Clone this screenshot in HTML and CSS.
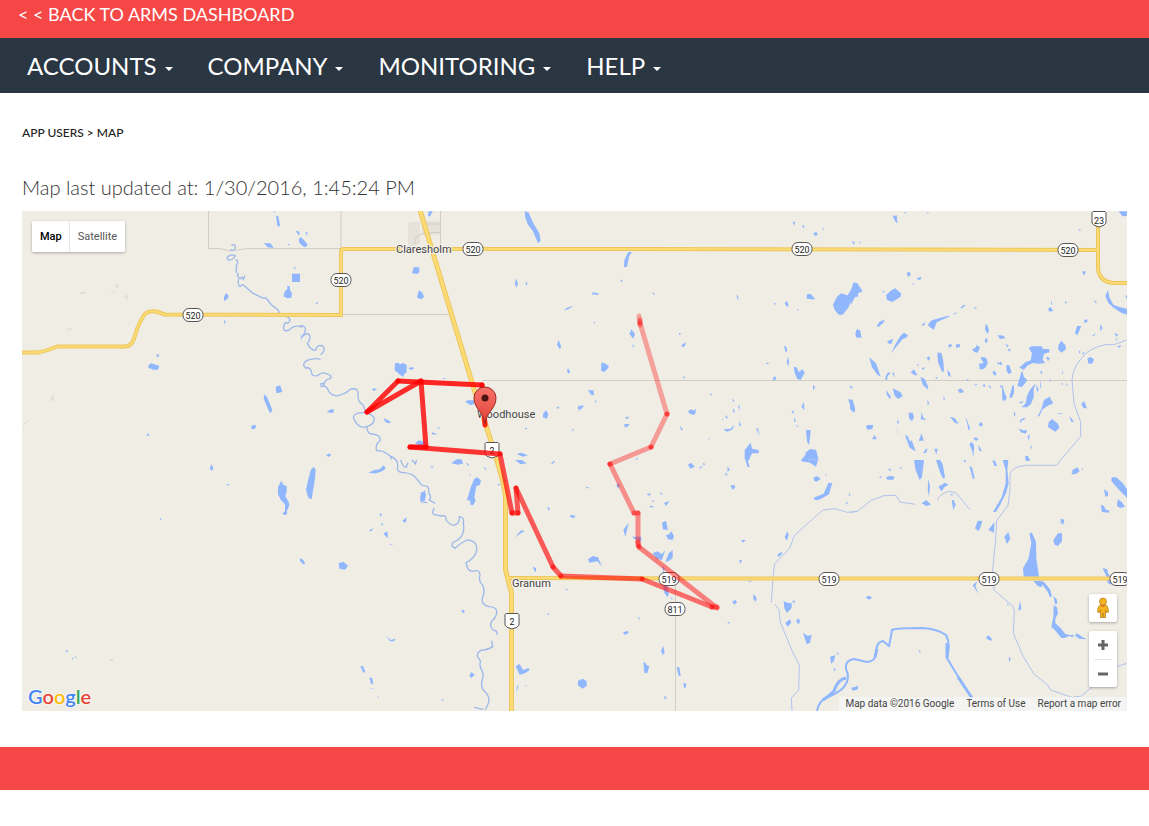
FILE: index.html
```
<!DOCTYPE html>
<html lang="en">
<head>
    <meta charset="UTF-8">
    <title>App Users - Map</title>
    <link rel="stylesheet" href="styles.css">
</head>
<body>
    <header class="top-bar">
        <a href="#">&lt; &lt; BACK TO ARMS DASHBOARD</a>
    </header>

    <nav class="main-nav">
        <a href="#">ACCOUNTS <span class="caret"></span></a>
        <a href="#">COMPANY <span class="caret"></span></a>
        <a href="#">MONITORING <span class="caret"></span></a>
        <a href="#">HELP <span class="caret"></span></a>
    </nav>

    <main class="content">
        <div class="breadcrumb">APP USERS &gt; MAP</div>
        <h1 class="updated">Map last updated at: 1/30/2016, 1:45:24 PM</h1>

        <div class="map">
            <svg class="map-canvas" viewBox="0 0 1105 500" preserveAspectRatio="xMinYMin slice">
                <defs>
                    <g id="pill">
                        <rect x="-10" y="-6.5" width="20" height="13" rx="6" />
                    </g>
                    <path id="shield" d="M-6 -7.5 H6 Q7.5 -7 7 -4 V4 Q6.500 6.500 0 8 Q-6.500 6.500 -7 4 V-4 Q-7.500 -7 -6 -7.500Z" />
                    <linearGradient id="pinFill" x1="0" y1="0" x2="0" y2="1">
                        <stop offset="0" stop-color="#f8746a" />
                        <stop offset="1" stop-color="#e04038" />
                    </linearGradient>
                </defs>

                <!-- town area -->
                <path class="town" d="M386 12 L398 10 V32 L386 40Z M400 10 H418 V24 H400Z" />

                <!-- small roads -->
                <g class="minor">
                    <path d="M186.500 0 V37.500 H198 Q206 41 216 39 Q222 37.500 230 37.500 H319" />
                    <path d="M319 0 V38 M418.500 0 V38 M319 103.500 H428 M460 169.500 H1105 M653.500 368 V500" />
                    <path d="M393 33 V27 Q398 23 405 21.500 H418 M405 13 H418" />
                </g>

                <!-- rivers and canals -->
                <g class="river">
                    <g transform="translate(0 -1) scale(.33333)">
                        <path d="M628 106 Q640 100 640 112 T624 120 M618 138 Q612 150 622 150 T640 138 Q628 130 618 140 M640 150 Q652 150 644 164 L642 188 M648 188 Q644 200 656 206 Q662 196 664 210 L668 196 M650 206 Q646 226 654 230 Q660 220 668 228 L690 248 722 264 732 264 748 284 768 300 776 318 Q800 316 804 330 Q800 344 790 338 Q780 352 788 362 Q802 364 808 354 Q822 344 840 352" />
                    </g>
                    <g transform="translate(278 -1) scale(.33333)">
                        <path d="M0 346 Q18 348 16 360 T6 380 Q20 366 28 374 Q34 386 22 400 Q34 424 48 420 Q50 402 68 408 Q80 420 62 434 M62 448 Q40 442 20 452 Q4 462 16 474 Q32 470 34 486 T54 496 Q64 486 76 490 Q100 496 90 506 Q72 510 72 524 Q58 514 64 530 Q80 524 86 544 Q98 560 116 556 Q140 550 150 538 Q178 530 174 560 Q174 574 190 586 Q196 608 200 608 M200 608 Q162 606 160 622 Q170 652 192 652 Q228 644 222 622 Q212 612 200 608 M200 650 Q202 674 218 672 Q244 676 240 692 Q224 704 230 722 Q248 720 262 732 Q272 736 275 748" />
                    </g>
                    <g transform="translate(278 249) scale(.33333)">
                        <path d="M270 -12 Q298 -2 292 24 Q292 38 312 38 Q338 40 350 56 Q358 68 366 76 Q390 76 386 94 L386 100 M376 92 Q358 108 364 126 L382 128 M386 100 Q396 110 388 120 L406 130 M402 144 Q394 164 404 164 L424 168 Q440 164 438 180 Q446 192 462 196 Q480 190 478 170 Q494 172 490 190 Q494 212 486 226 Q478 240 458 248 Q452 262 466 264 Q480 250 500 240 Q534 242 530 272 Q524 296 498 308 Q502 334 518 334 Q540 326 540 346 Q534 362 548 376 Q556 392 548 412 Q542 434 566 440 Q592 440 590 458 Q588 474 576 482 Q566 500 580 510 Q594 512 590 524 M575 542 L578 560 Q560 572 544 570 Q528 580 534 592 L542 604 Q536 618 546 632 Q552 644 546 662 Q542 684 552 692 Q570 708 566 728 L556 750 M522 742 L550 748" />
                        <path d="M302 0 Q310 24 318 22 L324 8 M336 0 L346 12 350 0" />
                    </g>
                    <g class="canal">
                        <path transform="translate(556 249) scale(.33333)" d="M840 154 L808 157 770 146 735 150 650 225 635 265 590 312 585 350 580 428 M590 432 L603 450 607 486 643 574 664 615 662 690 640 714 642 752" />
                        <path transform="translate(828 249) scale(.33333)" d="M0 157 L22 154 62 122 102 107 138 106 150 126 196 133 M262 122 Q266 104 296 94 L318 98 360 149 M632 0 L620 16 528 16 Q484 20 480 44 L480 90 474 136 440 182 436 250 428 330 432 390 488 438 493 452 490 520 520 590 552 642 592 674 602 690 666 712 694 708 730 678 800 620 830 610" />
                        <path transform="translate(828 -1) scale(.33333)" d="M830 390 L792 404 766 404 Q714 414 690 450 Q668 478 666 510 L672 580 692 636 692 680 632 750" />
                    </g>
                </g>

                <!-- lakes -->
                <g class="water">
                    <path transform="translate(0 -1) scale(.33333)" d="M762 17 l7 2 5 25 -2 6 -6 -3Z M754 4 l5 0 -1 5Z M726 99 l20 1 9 14 -18 -2Z M822 64 l6 -2 6 8 -5 6Z M830 86 l10 -4 0 24 -8 -8Z M810 191 h24 v25 h-24Z M796 228 l7 0 1 12 6 10 -2 13 -12 2 -12 -6 4 -14 8 -8Z M815 172 l6 0 -2 8Z M612 249 l8 8 -3 9 -11 7 0 -12Z M606 330 l5 4 -3 10Z M380 465 l8 -5 24 8 -4 11 -14 0 -15 -6Z M403 434 l7 -2 1 7 -6 3Z M761 530 l14 -4 6 20 -18 4Z M727 553 l8 8 16 38 -4 10 -5 -3 -17 -40Z M688 648 l10 -4 5 4 -4 8 -10 2Z M373 676 l8 -7 1 5 -5 5Z M797 102 l6 0 -2 5Z M835 372 l6 10 -2 10Z" />
                    <path transform="translate(278 -1) scale(.33333)" d="M0 82 l10 6 13 16 -6 8 -10 -4 -7 -10Z M386 4 h12 l-8 16 -6 -2Z M674 4 l12 4 14 32 18 30 4 22 -8 8 -8 -20 -8 -18 -14 -18 -8 -20Z M341 172 h17 l0 14 -6 6 -16 -2Z M357 241 l9 6 6 12 -4 7 -12 0 -5 -6Z M647 205 l7 14 -4 14 -5 -9Z M677 213 l6 8 -5 6Z M793 302 l6 -8 21 -7 -10 8Z M46 280 l9 -4 -3 7Z M776 390 l8 20 -5 8 -8 -14Z M804 475 l7 10 -6 6 -4 -8Z M285 460 l10 -2 5 5 10 -4 10 6 0 22 -8 6 -2 8 -12 -8 -14 -12Z M325 474 l12 -3 6 4 -10 5Z M428 503 l10 2 -6 3Z M496 576 l6 -5 20 0 0 11 -10 4Z M88 600 l12 -3 2 10 -8 2 -14 -4Z M216 538 l6 5 10 -6 -12 -2Z M250 624 l14 7 10 6 -8 3 -10 -4Z M396 666 l6 4 8 0 -4 4 -10 -1Z M410 656 l8 -6 2 4Z M345 700 l12 -9 16 4 4 8 -18 4Z M370 566 l4 6 -4 12Z M370 625 l6 6 -6 4Z M738 600 l7 12 -4 14 -12 -4 0 -10Z M768 594 l10 -5 -2 7Z M834 585 l8 8 -5 12Z M674 653 l8 2 -6 4Z M650 732 l14 -4 20 8 -16 4Z M78 736 l10 -6 5 5 -7 6Z M814 664 l6 -10 1 6Z M16 68 l6 -3 0 12Z" />
                    <path transform="translate(556 -1) scale(.33333)" d="M150 127 l12 -2 -9 14 -2 12 -4 20 -9 0 1 -20Z M127 208 l7 4 -5 5Z M44 247 l16 3 2 5 -14 -2 -6 2Z M221 247 l8 3 0 6Z M160 358 l11 14 -5 14 -12 -14Z M164 403 l6 6 -6 3Z M70 458 l7 0 16 10 -4 8 -10 10 -10 -4Z M311 405 l12 -8 -2 12 -8 2Z M302 368 l8 3 -6 4Z M313 500 l8 0 -3 6Z M46 336 l6 0 -3 5Z M30 541 l16 0 2 14 -8 0Z M0 592 l10 -6 8 2 -8 9 -10 0Z M51 570 l5 6 -5 2Z M139 624 l12 -5 0 8Z M139 642 l16 0 -8 10 -7 -1Z M331 602 l10 -4 6 4 7 -6 -2 16 -8 3 -12 -7Z M307 647 l6 10 3 4 -8 -2Z M476 253 l4 6 2 12 -5 -6Z M644 35 l7 1 -2 12Z M672 46 l8 2 -4 7Z M705 70 l10 -4 4 8 -6 5Z M822 93 l8 4 -2 6Z M734 54 l5 2 -4 5Z M620 278 l8 -4 3 10 1 6 -8 -2Z M688 252 l10 0 14 16 -16 0 -11 -3Z M588 278 l7 3 -5 4Z M656 298 l6 0 -2 4Z M765 284 l12 -24 12 -10 20 6 12 -20 6 -20 13 8 0 36 -18 2 -10 30 -18 22 -12 0 -12 -14Z M832 370 l8 -16 0 30 -6 -2Z M618 409 l6 0 4 14 -5 4Z M630 440 l3 14 -2 16 -5 -14Z M647 470 l9 2 6 14 12 -8 6 10 -12 22 -10 -3 -8 -18Z M586 500 l8 0 -1 10 -8 2Z M563 458 l12 0 -8 5Z M396 550 l6 2 -3 6Z M705 525 l7 6 -7 10Z M814 526 l10 5 -4 6Z M810 566 l10 6 10 32 -8 0Z M670 590 l8 -15 1 26Z M640 602 l8 0 -2 10Z M648 620 l6 14 -5 3Z M655 642 l6 8 -4 1Z M463 566 l6 5 -4 6Z M466 594 l4 10 2 4 -8 -4Z M480 590 l5 -4 0 12 3 8Z M442 622 l4 -7 4 12Z M432 628 l5 -3 -3 6Z M484 633 l6 14 -7 0Z M436 657 l20 0 14 -13 -8 15 -16 6Z M534 655 l6 0 5 22Z M391 686 l7 0 -6 3Z M684 660 h14 l-1 16 -4 30 -6 -12Z M518 698 l4 18 20 4 0 10 -20 0 -10 22 -12 -4 0 -28Z M696 717 l18 2 8 30 -36 0 -4 -20Z M670 750 l16 -20 4 20Z M172 750 l6 -10 0 8Z" />
                    <path transform="translate(828 -1) scale(.33333)" d="M126 15 l4 4 10 -4 2 25 -5 -4Z M163 6 l7 2 -5 3Z M230 7 l8 2 -5 2Z M6 93 l8 8 -5 1Z M29 92 l4 6 -3 4Z M0 248 l12 -30 10 2 16 24 -18 8 -18 34Z M108 256 l14 -14 14 -7 18 16 -3 10 -16 10 -8 5 -16 -6Z M98 241 l6 4 -5 4Z M170 188 l10 -2 2 10 -8 4Z M201 205 l11 -5 2 8 -10 2Z M188 220 l6 3 -5 2Z M80 348 l8 -12 17 -8 -6 12 -14 11Z M18 360 l12 0 5 24 -12 -2Z M112 394 l18 -8 -6 16 -10 -2Z M123 430 l14 -28 14 -24 10 -10 12 6 -2 8 -14 6 -16 20Z M233 345 l12 -14 50 -14 5 2 -40 18 -8 22 -10 -6Z M214 345 l12 -8 -4 10Z M308 313 l12 -7 -4 7Z M330 295 l10 -10 8 0 -12 10Z M369 292 l12 2 -4 4Z M407 342 l4 2 6 16 -4 12 -8 -12Z M404 395 l3 -12 7 7 -5 10Z M443 375 l18 2 5 8 -16 2Z M294 406 l8 -4 5 4 -8 8Z M318 403 h12 l0 8 -12 2Z M366 418 l10 -4 4 -8 10 6 -7 16 -10 -2Z M391 443 q20 -8 22 16 q-8 24 -24 18 l-2 -16 14 -2Z M443 454 l6 6 4 -6 4 12 -14 -4Z M466 402 l10 4 -4 6Z M474 416 l9 2 -6 8Z M470 464 l8 2 7 22 -10 4 -6 -12Z M262 428 h12 l6 26 2 30 -6 2 -12 -30Z M292 480 l8 8 2 14 -8 -6Z M230 443 l8 -4 2 8 -5 5Z M200 464 l6 -3 -2 8Z M215 475 l12 -4 -8 9Z M182 488 l10 -10 10 18 -6 0Z M210 502 l6 4 M256 502 l8 0 -5 6Z M58 442 l20 18 14 40 -10 -6 -16 -22Z M105 508 q4 -22 14 -22 l0 8 q-8 0 -7 16Z M126 488 l6 0 2 16Z M211 500 l14 8 10 24 -2 6 -14 -12Z M536 415 l8 -6 32 0 2 8 20 0 0 10 -16 4 -4 18 8 10 -20 2 -18 -2 -16 8 -10 12 -14 -6 18 -16 16 -6 4 -22Z M634 392 l12 14 2 12 -14 10 -10 -10 2 -14Z M516 481 l6 20 10 10 -16 20 -14 -3 8 -28Z M588 440 l12 4 -6 10Z M712 446 l8 -6 12 8 -4 12 -12 2Z M686 421 l6 4 -4 6Z M696 430 l8 -4 -4 8Z M675 370 l6 -22 13 0 -6 14 -6 14Z M702 330 l10 -2 0 8 -8 3Z M750 342 l8 12 -7 10Z M727 376 l10 -6 -6 9Z M793 368 l12 6 -6 6Z M797 382 l5 8 -4 2Z M800 410 l14 -5 -5 8Z M696 185 l11 -2 -4 14Z M594 296 l8 -5 8 12 -12 2Z M603 270 l3 12 -3 4Z M645 273 l6 4 -5 5Z M732 270 l9 6 -4 4Z M774 240 l4 22 12 22 16 6 25 6 0 18 -18 -6 -24 -16 -14 -14 -9 -20Z M826 258 l6 -4 0 16Z M806 4 h25 v14 l-14 1Z M686 58 l8 1 -6 4Z M323 540 l10 -5 10 12 -14 2Z M108 540 l14 18 -1 10 -10 -12Z M128 535 l12 6 12 6 6 12 -14 8 -10 -10Z M232 570 l6 10 -5 6Z M280 560 l6 6 -5 4Z M456 540 l2 -15 4 18 8 20 -5 10 -8 -3Z M478 562 l4 -16 6 -20 4 0 0 24 -7 14Z M515 592 l12 -12 4 -22 10 -20 16 -18 -6 18 0 24 -8 20 -12 10Z M506 577 l15 -3 -8 7Z M558 521 l8 18 -5 8Z M562 620 l12 -22 8 -28 16 -10 12 20 -14 6 -18 12 -10 20Z M622 610 l18 0 -10 3Z M694 583 l8 -10 9 22 -10 0Z M606 627 l18 14 4 12 -12 12 -22 -14 2 -14Z M658 620 l6 4 8 12 -8 0Z M491 603 l6 10 -5 8Z M510 632 q8 -12 18 -6 l-10 4 -8 10Z M506 655 l12 6 14 0 -5 10 -14 -4Z M532 680 l7 -8 -2 20Z M0 568 l8 2 8 28 -4 10 -12 -12Z M48 650 l4 -5 18 0 -3 12 -14 2Z M66 688 l8 -14 6 14Z M141 628 l7 10 -6 3Z M141 650 l3 14 1 14Z M176 608 h12 l4 14 -6 12 -9 -9Z M212 628 l3 -22 4 16 10 8Z M300 620 l14 4 12 18 -12 -4Z M346 622 l6 10 9 26 -6 2 -3 -18Z M386 642 l8 -6 5 10 -8 4Z M165 676 l8 2 8 18 4 -6 12 34 -6 -3 -12 -8Z M206 692 l9 -22 6 22Z M220 728 l8 -12 5 0 -6 14Z M253 716 h10 l-4 18Z M370 686 l8 -5 7 6 -6 6Z M358 702 l8 -6 6 10 0 14 -3 24 -2 -20Z M385 704 l8 14 2 6 -8 -2Z M526 738 l8 0 6 12 -14 0Z M543 704 l3 12 -5 -2Z M397 528 l6 -7 4 10Z M414 526 l8 2 0 8Z M427 486 l8 -4 5 14 -8 0Z M372 524 l10 -2 -4 5Z M450 526 l10 3 -8 4Z M572 480 l6 8 -6 5Z M570 510 l4 18 -3 8Z M598 508 l6 4 -3 4Z M636 480 l4 8 -2 6Z M634 518 l5 3 -2 6Z M648 520 l5 3 -3 6Z M352 506 l5 3 -8 3Z" />
                    <path transform="translate(0 249) scale(.33333)" d="M568 12 l6 12 -3 8 -8 -4Z M614 71 l10 3 -9 3Z M778 62 l6 12 10 4 0 16 -4 14 10 18 2 8 -4 14 -4 2 2 10 -6 6 -9 -5 8 -8 0 -20 -12 -12 -9 -18 0 -22Z M414 173 l5 4 -4 4Z M832 296 l8 2 0 8Z M150 592 l4 3 -3 5Z M160 587 l4 5 -4 2Z M131 572 l8 -2 -5 9Z" />
                    <path transform="translate(278 249) scale(.33333)" d="M32 30 l10 -10 5 10 -2 26 -10 62 -10 -4 -7 -26 6 -26Z M205 38 l18 -8 16 -2 12 -12 6 8 -8 8 -20 8 -12 0Z M513 80 l10 -24 10 -4 10 10 -4 14 -10 2 -6 34 4 10 -8 14 -8 -2 0 -12 -10 -2 6 -20Z M454 10 l16 -12 14 0 6 12 -14 4Z M498 8 l8 4 -2 7Z M508 42 l5 3 -3 4Z M551 21 l8 4 -3 6Z M592 72 l12 2 -8 3Z M645 0 h20 l15 10 -18 3Z M753 12 l8 -10 4 3 -8 7Z M362 98 l12 -4 4 10 -4 20 -12 -2Z M238 160 l8 3 -4 8Z M243 188 l7 4 -4 6Z M206 212 l14 -8 -6 10Z M262 213 l2 22 -14 -14Z M307 182 l12 -10 0 12 -6 4Z M267 253 l14 0 -8 2Z M116 310 l14 -5 14 12 -8 12 -18 -3Z M0 295 l10 5 5 10 -3 4 -12 -10Z M484 450 l8 0 3 6 -6 4Z M258 528 l14 12 14 -4 -4 8 -12 0Z M181 618 l8 0 7 18 -6 2Z M208 653 l8 0 4 16 -6 5Z M209 684 l14 2 -8 1Z M647 618 l12 -6 10 18 16 -6 4 6 -14 10 -16 4 -6 -12Z M514 636 l10 8 -10 10 -6 -6Z M649 698 l2 -18 6 -6Z M670 676 l12 1 -4 2Z M838 658 l2 22 -7 -8Z M645 236 l8 -14 12 -12 8 4 -14 8 -14 12Z M698 320 l10 4 0 12 -4 -2Z M742 140 l8 5 -4 8Z M811 165 l16 2 -6 8 -10 -4Z M796 385 l8 4 -4 3Z M741 460 l8 2 -4 4Z M425 716 l7 5 -5 3Z M232 706 l4 5 -2 3Z M390 18 l12 2 -6 4Z" />
                    <path transform="translate(556 249) scale(.33333)" d="M330 14 l9 -6 12 12 -14 6Z M362 25 l8 -6 2 5Z M375 8 l7 4 -5 5Z M448 20 l8 8 -7 8Z M441 38 l8 4 -5 6Z M502 0 h7 l6 20 -6 2Z M670 0 h50 l-6 20 -18 -12 -26 -4Z M707 52 l12 -3 9 8 -12 8 -8 -3Z M707 113 l30 -12 14 -32 12 0 -10 34 -18 10 -16 8 -10 -2Z M457 76 l14 0 0 8 -8 5Z M24 80 l10 2 -8 4Z M205 102 l15 -2 -6 8Z M214 137 l15 2 -10 4Z M247 96 l7 5 -5 4Z M258 128 l16 -4 -10 15Z M222 120 l7 2 -4 5Z M115 76 l6 -7 4 8 -4 10Z M136 210 l8 -12 8 -8 -10 40Z M162 230 l28 0 0 14 -20 -6Z M252 188 l12 -6 6 28 -15 -2Z M264 226 l10 -4 6 -8 8 14 -4 12 -14 -2Z M224 280 l14 -6 14 8 10 -12 -10 30 -16 -4Z M262 306 l10 -26 12 -10 0 24 -10 8Z M30 298 l14 -10 16 4 12 28 -14 -16 -24 4Z M253 314 l8 12 -5 14Z M256 378 l12 0 5 24 -5 10 -9 -14Z M278 410 l7 8 -5 0Z M489 240 l14 0 -8 8Z M484 300 l8 0 -6 12Z M620 232 l8 -18 4 10 -5 18Z M598 284 l12 -8 4 4 -12 12Z M512 363 l11 2 -9 2Z M463 424 l10 -4 4 8 -9 6Z M526 402 l10 12 -3 12 -7 -10Z M617 424 l12 4 12 2 0 14 -14 15 -8 -14Z M642 424 l8 -3 0 10Z M622 488 l14 -10 4 10 -12 12Z M654 480 l10 -4 2 12 -7 4Z M675 518 l14 10 12 -4 -5 24 -10 5Z M447 487 l10 0 -4 4Z M180 468 l6 8 -3 4Z M134 518 l14 -6 4 6 -10 7Z M249 572 l7 -14 4 18 -6 10Z M196 606 l6 2 4 8 8 2 -6 22 -9 -2Z M296 622 h8 l4 26 -6 0Z M316 670 h8 l0 12 -6 2Z M258 708 l8 4 -5 8Z M0 662 l14 -6 12 8 0 14 -12 8 -14 -10Z M756 590 l16 -4 -4 16 -8 10Z M778 574 l4 8 -4 4Z M766 625 l8 2 -5 7Z M812 98 l6 8 -5 2Z M803 130 l6 -6 -2 10Z M820 684 l20 -6 0 10 -12 2Z M742 42 l5 2 -3 4Z" />
                    <path transform="translate(828 249) scale(.33333)" d="M192 0 h30 l-6 52 -7 8 -12 -30Z M258 0 h12 l8 12 7 40 -5 4 -8 -14Z M265 80 l20 -12 10 6 -12 8 -8 12Z M215 130 l14 -10 14 14 -14 4Z M235 56 l5 24 -3 30 -4 -22Z M108 52 l14 -5 12 4 -4 8 -18 0Z M86 52 l8 -4 0 6Z M113 28 l8 -2 2 8Z M147 22 l9 2 -4 4Z M358 18 l8 4 8 32 -5 4Z M427 0 l9 4 5 14 -8 0Z M340 0 l8 0 -3 8Z M458 0 h17 l-3 30 4 40 -8 30 -18 36 -12 20 -9 0 26 -44 12 -42 0 -40Z M375 205 l8 -22 14 -1 -5 18 -6 14Z M415 210 l18 -24 -1 32Z M463 230 l12 -14 6 20 -10 16Z M305 120 l6 0 6 14 -7 16Z M300 102 l12 2 -8 3Z M538 220 l8 -2 12 28 1 50 8 54 -46 0 -2 -25 16 -28 4 -20 5 -28Z M550 362 l28 2 -3 18 -12 -4Z M610 240 l14 -20 12 0 0 24 -12 14 -10 -4Z M632 176 l11 3 -3 15 -8 -6Z M667 30 l16 -8 6 12 -12 8 -10 0Z M664 40 l5 3 -3 3Z M694 24 l6 3 -3 4Z M785 52 l14 0 20 18 12 18 0 26 -14 -14 -24 -26 -9 -12Z M762 88 l12 8 0 12 -8 2Z M752 134 l10 4 4 10 12 4 -2 6 -20 -2Z M803 118 l12 8 10 14 -14 4 -10 -6Z M758 324 l14 4 2 12 12 16 0 18 -12 -4 -4 -18Z M368 376 l14 -12 -6 14 10 24Z M408 534 l6 -8 10 8 2 8 -10 -2Z M505 446 l6 -24 3 24 -6 6Z M471 430 l6 3 -4 5Z M476 596 l3 -6 3 8 -4 8Z M46 412 l12 -5 8 6 -8 6Z M205 570 l8 4 -4 4Z M4 684 l22 -4 -8 10 -10 2Z M204 722 l6 2 -6 5Z M525 0 l18 0 -10 4Z M568 362 l14 4 18 22 6 20 -6 4 -8 -18Z M610 408 l10 10 2 12 -6 4Z M611 436 l10 6 3 18 -8 16 0 14 16 14 14 18 16 4 -18 8 -10 0 -18 -22 -12 -12 6 -30Z M656 526 l14 -2 2 6 -10 0Z M678 520 l10 4 8 6 14 8 -22 -2 -12 -8Z" />
                </g>

                <!-- wide creek in the south -->
                <g class="creek">
                    <path d="M795 500 Q797 490 804 487 Q816 482 821 477 Q829 468 824 458 Q823 449 832 448 L845 451 Q854 450 854 442 Q854 431 861 430 L867 435 Q869 426 870 419 Q874 417 900 417 Q916 418 924 424 Q929 433 925 447 Q936 466 950 487" />
                    <path d="M801 489 Q806 486 812 480 Q816 468 824 467 M925 432 L925 447 M853 446 L855 438 M936 466 L950 487" class="thick" />
                </g>

                <!-- hills -->
                <path class="hill" d="M58 82 l5 -1 -1 2Z M93 74 l4 0 -2 3Z M102 86 l3 -2 1 5Z M45 119 l5 -2 -2 2Z M28 190 l3 -6 1 4Z M1 214 l5 -5 -2 3Z M89 82 l3 -1Z M87 449 l3 -1 1 2Z M23 498 l3 -3Z" />

                <!-- highways -->
                <g class="road-edge">
                    <path d="M0 141.500 H15 Q22 141 35 135.500 H103 C111 135 112 128 115 118 C121 104 123 99 134 100.500 L143 103.500 L319 104 V41 Q319 38 322 38 H600 L1076 39" />
                    <path d="M1076 0 V57 Q1077 71 1092 72 H1105" />
                    <path d="M398 -1 L452 178 L470 233 L475 250 Q483 276 483.500 286 V359 L489.500 382 V500" class="wide" />
                    <path d="M487 367 L700 367.500 H1105" />
                </g>
                <g class="road">
                    <path d="M0 141.500 H15 Q22 141 35 135.500 H103 C111 135 112 128 115 118 C121 104 123 99 134 100.500 L143 103.500 L319 104 V41 Q319 38 322 38 H600 L1076 39" />
                    <path d="M1076 0 V57 Q1077 71 1092 72 H1105" />
                    <path d="M398 -1 L452 178 L470 233 L475 250 Q483 276 483.500 286 V359 L489.500 382 V500" class="wide" />
                    <path d="M487 367 L700 367.500 H1105" />
                </g>

                <!-- road numbers -->
                <g class="sign">
                    <use href="#pill" x="171" y="104" /><text x="171" y="107.500">520</text>
                    <use href="#pill" x="319" y="69" /><text x="319" y="72.500">520</text>
                    <use href="#pill" x="451" y="38" /><text x="451" y="41.500">520</text>
                    <use href="#pill" x="780" y="38" /><text x="780" y="41.500">520</text>
                    <use href="#pill" x="1046" y="39" /><text x="1046" y="42.500">520</text>
                    <use href="#pill" x="647" y="368" /><text x="647" y="371.500">519</text>
                    <use href="#pill" x="807" y="368" /><text x="807" y="371.500">519</text>
                    <use href="#pill" x="967" y="368" /><text x="967" y="371.500">519</text>
                    <use href="#pill" x="1098" y="368" /><text x="1098" y="371.500">519</text>
                    <use href="#pill" x="653" y="398" /><text x="653" y="401.500">811</text>
                    <use href="#shield" x="1077" y="8" /><text x="1077" y="12.500">23</text>
                    <use href="#shield" x="470" y="239" /><text x="470" y="243">2</text>
                    <use href="#shield" x="490" y="410" /><text x="490" y="414">2</text>
                </g>

                <g class="place">
                    <text x="374" y="42">Claresholm</text>
                    <text x="455" y="207">Woodhouse</text>
                    <text x="490" y="376">Granum</text>
                </g>

                <!-- tracked route, newest part is the strongest -->
                <g class="route">
                    <path opacity=".85" d="M463 214 L460 174" />
                    <path opacity=".85" d="M460 174 L376 170" />
                    <path opacity=".82" d="M376 170 L345 201" />
                    <path opacity=".82" d="M345 201 L399 170" />
                    <path opacity=".8" d="M399 170 L404 236" />
                    <path opacity=".8" d="M404 236 L388 236" />
                    <path opacity=".78" d="M388 236 L478 243" />
                    <path opacity=".68" d="M478 243 L490 302" />
                    <path opacity=".66" d="M490 302 H496" />
                    <path opacity=".64" d="M496 302 L494 277" />
                    <path opacity=".62" d="M494 277 L531 356" />
                    <path opacity=".6" d="M531 356 L539 365" />
                    <path opacity=".58" d="M539 365 L620 368" />
                    <path opacity=".54" d="M620 368 L690 396" />
                    <path opacity=".5" d="M690 396 H695" />
                    <path opacity=".46" d="M695 397 L617 336" />
                    <path opacity=".44" d="M617 336 L616 331" />
                    <path opacity=".42" d="M616 334 V302" />
                    <path opacity=".42" d="M616 302 H612" />
                    <path opacity=".4" d="M612 302 L588 253" />
                    <path opacity=".36" d="M588 253 L629 236" />
                    <path opacity=".34" d="M629 236 L645 203" />
                    <path opacity=".32" d="M645 203 L618 112" />
                    <path opacity=".3" d="M618 114 L617 105" />
                    <path opacity=".4" d="M588 253 V253 M629 236 V236 M645 203 V203 M618 112 V109" />
                </g>

                <!-- marker -->
                <path class="pin" d="M463 213 C462 201 452 198 452 187 A10.500 10.500 0 0 1 474 187 C474 198 464 201 463 213Z" />
                <circle class="pin-dot" cx="463" cy="187" r="3.500" />
            </svg>

            <div class="map-type">
                <button type="button" class="active">Map</button>
                <button type="button">Satellite</button>
            </div>

            <div class="map-controls">
                <button type="button" class="pegman" aria-label="Street View">
                    <svg viewBox="0 0 14 22" width="14" height="22">
                        <path d="M4 8 Q2 9 1.500 15 L3.500 15.500 L4.500 13 L4.500 20.500 H6.800 L7 16 L7.300 20.500 H9.500 V13 L10.500 15.500 L12.500 15 Q12 9 10 8Z" fill="#f6b420" stroke="#b87e1a" stroke-width=".8" />
                        <circle cx="7" cy="4.500" r="3.500" fill="#f6b420" stroke="#b87e1a" stroke-width=".8" />
                        <path d="M4.500 8 H9.500 L7 10.500Z" fill="#e5701b" />
                    </svg>
                </button>
                <div class="zoom">
                    <button type="button" aria-label="Zoom in">
                        <svg viewBox="0 0 10 10" width="10" height="10"><path d="M0 5 H10 M5 0 V10" /></svg>
                    </button>
                    <button type="button" aria-label="Zoom out">
                        <svg viewBox="0 0 10 10" width="10" height="10"><path d="M0 5 H10" /></svg>
                    </button>
                </div>
            </div>

            <a href="#" class="logo"><span class="b">G</span><span class="r">o</span><span class="y">o</span><span class="b">g</span><span class="g">l</span><span class="r">e</span></a>

            <div class="map-legal">
                <span>Map data ©2016 Google</span>
                <a href="#">Terms of Use</a>
                <a href="#">Report a map error</a>
            </div>
        </div>
    </main>

    <footer class="footer"></footer>
</body>
</html>
```
FILE: styles.css
```
* {
    box-sizing: border-box;
}

body {
    margin: 0;
    background: #fff;
    color: #333;
    font-family: Lato, sans-serif;
}

a {
    color: inherit;
    text-decoration: none;
}

button {
    border: none;
    background: #fff;
    padding: 0;
    font-family: Roboto, sans-serif;
    cursor: pointer;
}

.top-bar {
    height: 38px;
    padding: 2px 18px;
    background: #f64747;
    color: #fff;
    font-size: 18px;
    line-height: 24px;
}

.main-nav {
    display: flex;
    gap: 35px;
    padding: 0 27px;
    background: #2b3643;
    color: #fff;
    font-size: 24px;
    line-height: 55px;
}

.main-nav a {
    display: flex;
    align-items: center;
    gap: 8px;
}

.caret {
    border-top: 4px solid #fff;
    border-left: 4px solid transparent;
    border-right: 4px solid transparent;
    margin-top: 6px;
}

.content {
    padding: 30px 22px 36px;
}

.breadcrumb {
    font-size: 12px;
    line-height: 20px;
    font-weight: 500;
    color: #222;
}

.updated {
    margin: 29px 0 9px;
    font-size: 20px;
    font-weight: 300;
    line-height: 30px;
}

.map {
    position: relative;
    height: 500px;
    overflow: hidden;
    background: #f0ede5;
    font-family: Roboto, sans-serif;
}

.map-canvas {
    display: block;
    width: 100%;
    height: 100%;
}

.town {
    fill: #e6e2da;
}

.hill {
    fill: #e2dfd6;
    stroke: #e2dfd6;
}

.minor {
    fill: none;
    stroke: #d2cec6;
}

.water {
    fill: #90b7fd;
}

.river {
    fill: none;
    stroke: #9db9ea;
    stroke-width: 4;
}

.canal {
    stroke: #b0c3ea;
    stroke-width: 3;
}

.creek {
    fill: none;
    stroke: #90b7fd;
    stroke-width: 2;
}

.creek .thick {
    stroke-width: 3;
}

.road-edge {
    fill: none;
    stroke: #edc55c;
    stroke-width: 4;
}

.road-edge .wide {
    stroke-width: 5;
}

.road {
    fill: none;
    stroke: #fbdc74;
    stroke-width: 2;
}

.road .wide {
    stroke-width: 3;
}

.sign {
    fill: #fff;
    stroke: #555;
}

.sign text {
    fill: #222;
    stroke: none;
    font-size: 9px;
    text-anchor: middle;
}

.place text {
    fill: #444;
    stroke: #f5f3ee;
    stroke-width: 2;
    paint-order: stroke;
    font-size: 11px;
}

.route {
    fill: none;
    stroke: #f00;
    stroke-width: 5;
    stroke-linecap: round;
}

.pin {
    fill: url(#pinFill);
    stroke: #9c2b24;
}

.pin-dot {
    fill: #4b1411;
}

.map-type {
    position: absolute;
    top: 10px;
    left: 10px;
    display: flex;
    border-radius: 2px;
    box-shadow: 0 1px 3px rgba(0,0,0,0.3);
}

.map-type button {
    height: 31px;
    padding: 0 8px;
    border-radius: 2px;
    color: #565656;
    font-size: 11px;
}

.map-type .active {
    padding-right: 7px;
    border-right: 1px solid #e6e6e6;
    color: #000;
    font-weight: 500;
}

.map-controls {
    position: absolute;
    right: 10px;
    bottom: 24px;
    display: flex;
    flex-direction: column;
    gap: 9px;
}

.map-controls button {
    display: flex;
    align-items: center;
    justify-content: center;
    width: 28px;
    height: 28px;
}

.pegman,
.zoom {
    border-radius: 2px;
    background: #fff;
    box-shadow: 0 1px 3px rgba(0,0,0,0.3);
}

.zoom path {
    stroke: #666;
    stroke-width: 3;
}

.map-controls .zoom button {
    width: 18px;
    margin: 0 5px;
}

.zoom button + button {
    border-top: 1px solid #e6e6e6;
}

.logo {
    position: absolute;
    left: 6px;
    bottom: 3px;
    font-family: Lato, sans-serif;
    font-size: 20px;
    font-weight: 600;
    line-height: 24px;
    text-shadow: 0 0 2px #fff, 0 0 2px #fff;
}

.logo .b { color: #4285f4; }
.logo .r { color: #ea4335; }
.logo .y { color: #fbbc05; }
.logo .g { color: #34a853; }

.map-legal {
    position: absolute;
    right: 0;
    bottom: 0;
    display: flex;
    gap: 12px;
    padding: 0 6px;
    background: rgba(245,245,245,0.8);
    color: #444;
    font-size: 10px;
    line-height: 14px;
}

.footer {
    height: 43px;
    background: #f64747;
}
```
